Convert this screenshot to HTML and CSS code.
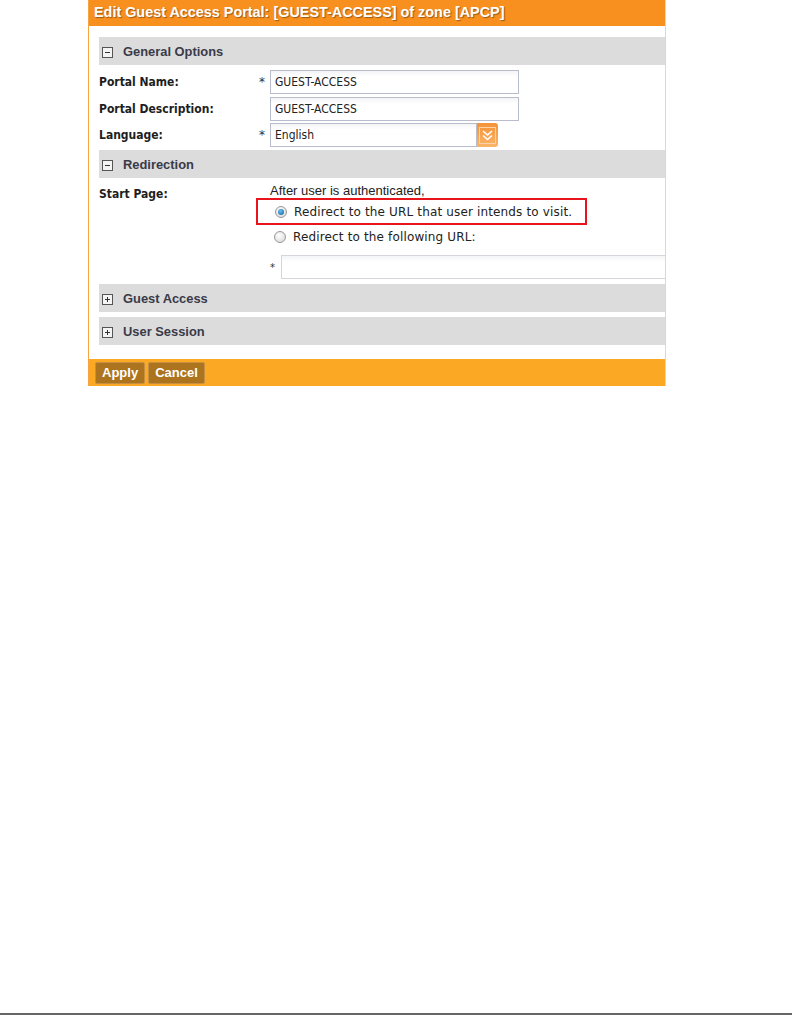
FILE: index.html
```html
<!DOCTYPE html>
<html lang="en">
<head>
    <meta charset="UTF-8">
    <title>Edit Guest Access Portal</title>
    <link rel="stylesheet" href="styles.css">
</head>
<body>
    <div class="sheet">
        <div class="panel">
            <div class="panel-title">Edit Guest Access Portal: [GUEST-ACCESS] of zone [APCP]</div>

            <div class="panel-body">
                <div class="section-head"><span class="toggle minus"></span>General Options</div>
                <div class="form-grid">
                    <div class="label">Portal Name:</div>
                    <div class="req">*</div>
                    <div class="field"><input class="text-input" type="text" value="GUEST-ACCESS"></div>

                    <div class="label">Portal Description:</div>
                    <div class="req"></div>
                    <div class="field"><input class="text-input" type="text" value="GUEST-ACCESS"></div>

                    <div class="label">Language:</div>
                    <div class="req">*</div>
                    <div class="field">
                        <div class="select">
                            <span class="select-value">English</span>
                            <span class="select-btn">
                                <svg width="13" height="13" viewBox="0 0 13 13">
                                    <path d="M2 2 L6.5 6 L11 2" fill="none" stroke="#fff" stroke-width="1.6"/>
                                    <path d="M2 6.5 L6.5 10.5 L11 6.5" fill="none" stroke="#fff" stroke-width="1.6"/>
                                </svg>
                            </span>
                        </div>
                    </div>
                </div>

                <div class="section-head"><span class="toggle minus"></span>Redirection</div>
                <div class="redirect">
                    <div class="label">Start Page:</div>
                    <div class="redirect-options">
                        <div class="intro">After user is authenticated,</div>
                        <div class="option highlighted"><span class="radio checked"></span>Redirect to the URL that user intends to visit.</div>
                        <div class="option"><span class="radio"></span>Redirect to the following URL:</div>
                        <div class="url-row"><span class="req">*</span><input class="url-input" type="text"></div>
                    </div>
                </div>

                <div class="section-head"><span class="toggle plus"></span>Guest Access</div>
                <div class="section-head"><span class="toggle plus"></span>User Session</div>
            </div>

            <div class="panel-foot">
                <button class="btn">Apply</button>
                <button class="btn">Cancel</button>
            </div>
        </div>
    </div>
</body>
</html>
```

FILE: styles.css
```css
body, html {
    margin: 0;
    padding: 0;
    background-color: #ffffff;
}

.sheet {
    height: 1013px;
    border-bottom: 2px solid #666;
}

.panel {
    margin-left: 88px;
    width: 576px;
    border-left: 1px solid #f7a440;
    border-right: 1px solid #d8d8d8;
    font-family: "Liberation Sans", Arial, sans-serif;
}

.panel-title {
    height: 26px;
    line-height: 25px;
    background-color: #f7901e;
    color: #fff;
    font-weight: bold;
    font-size: 14.4px;
    padding-left: 5px;
    text-shadow: 1px 1px 1px #9a5a18;
    white-space: nowrap;
}

.panel-body {
    padding: 11px 0 14px 10px;
}

.section-head {
    height: 28px;
    line-height: 27px;
    background-color: #dcdcdc;
    color: #3a3a48;
    font-weight: bold;
    font-size: 12.9px;
    display: flex;
    align-items: center;
}

.section-head + .section-head {
    margin-top: 5px;
}

.toggle {
    width: 9px;
    height: 9px;
    border: 1px solid #555;
    background: #f4f4f4;
    margin: 2px 10px 0 3px;
    position: relative;
}

.toggle::before {
    content: "";
    position: absolute;
    left: 2px;
    right: 2px;
    top: 4px;
    height: 1px;
    background: #333;
}

.toggle.plus::after {
    content: "";
    position: absolute;
    top: 2px;
    bottom: 2px;
    left: 4px;
    width: 1px;
    background: #333;
}

.form-grid {
    display: grid;
    grid-template-columns: 160px 11px 1fr;
    row-gap: 2.5px;
    padding: 5px 0 3px;
    align-items: center;
}

.label {
    font-weight: bold;
    color: #1e1e1e;
    font-family: "DejaVu Sans Condensed", "DejaVu Sans", sans-serif;
    font-size: 12px;
}

.req {
    font-size: 12px;
    color: #333;
    font-family: "DejaVu Sans", sans-serif;
}

.text-input {
    box-sizing: border-box;
    width: 249px;
    height: 24px;
    border: 1px solid #b8bccc;
    background: linear-gradient(#f3f4f6, #ffffff 6px);
    font-family: "DejaVu Sans Condensed", "DejaVu Sans", sans-serif;
    font-size: 12px;
    color: #222;
    padding: 0 4px;
    margin: 0;
    display: block;
}

.select {
    display: flex;
    height: 24px;
}

.select-value {
    box-sizing: border-box;
    width: 207px;
    height: 24px;
    line-height: 22px;
    border: 1px solid #b8bccc;
    background: linear-gradient(#f3f4f6, #ffffff 6px);
    font-family: "DejaVu Sans Condensed", "DejaVu Sans", sans-serif;
    font-size: 12px;
    color: #222;
    padding: 0 4px;
}

.select-btn {
    width: 21px;
    height: 24px;
    border-radius: 0 3px 3px 0;
    background: linear-gradient(#f49238, #fbb56a);
    display: flex;
    align-items: center;
    justify-content: center;
}

.select-btn svg {
    border: 1px solid #fcd3a8;
    padding: 1px;
}

.redirect {
    display: grid;
    grid-template-columns: 171px 1fr;
    padding-top: 6px;
    margin-bottom: 5px;
}

.redirect .label {
    padding-top: 3px;
}

.intro {
    font-size: 13px;
    color: #222;
    height: 14px;
    line-height: 14px;
}

.option {
    display: flex;
    align-items: center;
    height: 24px;
    font-family: "DejaVu Sans", sans-serif;
    font-size: 12px;
    letter-spacing: 0.15px;
    color: #222;
    padding-left: 4px;
    box-sizing: border-box;
}

.option.highlighted {
    height: 27px;
    margin-left: -14px;
    padding-left: 17px;
    width: 331px;
    border: 2px solid #e8141c;
}

.radio {
    width: 10px;
    height: 10px;
    border-radius: 50%;
    border: 1px solid #999;
    background: radial-gradient(circle at 40% 35%, #ffffff, #d4d4d4);
    margin-right: 7px;
    position: relative;
    flex: none;
}

.radio.checked::after {
    content: "";
    position: absolute;
    left: 2px;
    top: 2px;
    width: 6px;
    height: 6px;
    border-radius: 50%;
    background: radial-gradient(circle at 40% 35%, #6ac0f0, #0b5a9a);
}

.url-row {
    display: flex;
    align-items: center;
    margin-top: 6px;
}

.url-row .req {
    width: 11px;
    font-size: 10px;
}

.url-input {
    box-sizing: border-box;
    flex: 1;
    height: 24px;
    border: 1px solid #d4d6dc;
    border-right: none;
    background: linear-gradient(#f4f5f7, #ffffff 6px);
    margin: 0;
}

.panel-foot {
    height: 27px;
    background-color: #fba924;
    display: flex;
    align-items: center;
    gap: 3px;
    padding-left: 6px;
}

.btn {
    height: 22px;
    padding: 0 6px;
    border: 1px solid #c79040;
    border-radius: 2px;
    background-color: #ad7420;
    color: #fff;
    font-family: "Liberation Sans", Arial, sans-serif;
    font-weight: bold;
    font-size: 13px;
    cursor: pointer;
}
```
